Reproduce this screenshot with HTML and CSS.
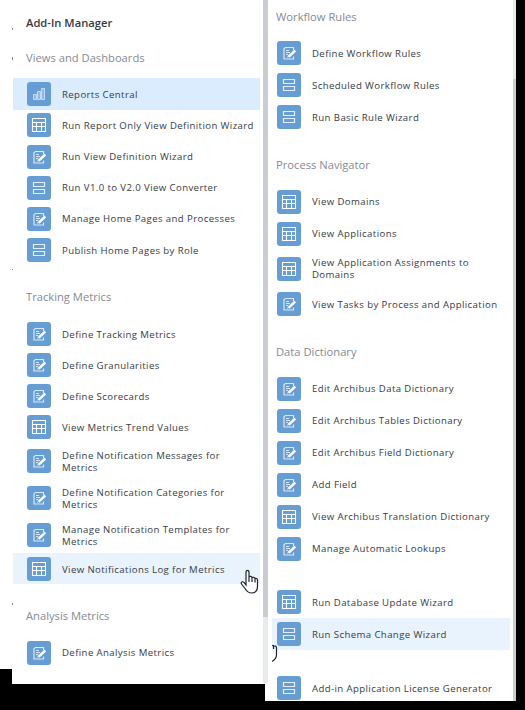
FILE: index.html
```html
<!DOCTYPE html>
<html lang="en">
<head>
<meta charset="utf-8">
<title>Add-In Manager</title>
<link rel="stylesheet" href="styles.css">
</head>
<body>
<svg class="defs" aria-hidden="true">
  <symbol id="chart" viewBox="0 0 24 24"><g fill="#8fb8e0" stroke="#c3daf0"><path d="M6.500 12.500h3v5h-3zM10.500 9.500h3v8h-3zM14.500 6.500h3v11h-3z"/></g></symbol>
  <symbol id="table" viewBox="0 0 24 24"><path fill="none" stroke="#fff" stroke-width="1.100" d="M5.500 5.500h13v13h-13zM5 9.500h14M5 13.500h14M9.500 9.500v9M14.500 9.500v9"/></symbol>
  <symbol id="form" viewBox="0 0 24 24"><g fill="none" stroke="#d9e8f6"><path stroke-width="1.200" d="M16.500 9V6.500h-8l-1.500 1v10.500h9.500V15.500M9 9.500h3M9 11.500h4M9 13.500h2"/><path stroke="#fff" stroke-width="2.400" d="M11.500 15.800L18.300 9.500"/><path d="M10.500 16.500l1.500-3"/></g></symbol>
  <symbol id="stack" viewBox="0 0 24 24"><path fill="none" stroke="#e3eef9" stroke-width="1.200" d="M6.500 6.500h11v4h-11zM6.500 13.500h11v4h-11z"/></symbol>
</svg>
<main class="app">
  <div class="gutter"></div>
  <section class="panel panel-left">
    <div class="content">
      <h1>Add-In Manager</h1>
      <h2>Views and Dashboards</h2>
      <ul>
        <li class="selected"><svg><use href="#chart"/></svg><span>Reports Central</span></li>
        <li><svg><use href="#table"/></svg><span>Run Report Only View Definition Wizard</span></li>
        <li><svg><use href="#form"/></svg><span>Run View Definition Wizard</span></li>
        <li><svg><use href="#stack"/></svg><span>Run V1.0 to V2.0 View Converter</span></li>
        <li><svg><use href="#form"/></svg><span>Manage Home Pages and Processes</span></li>
        <li><svg><use href="#stack"/></svg><span>Publish Home Pages by Role</span></li>
      </ul>
      <h2 class="tracking">Tracking Metrics</h2>
      <ul>
        <li><svg><use href="#form"/></svg><span>Define Tracking Metrics</span></li>
        <li><svg><use href="#form"/></svg><span>Define Granularities</span></li>
        <li><svg><use href="#form"/></svg><span>Define Scorecards</span></li>
        <li><svg><use href="#table"/></svg><span>View Metrics Trend Values</span></li>
        <li class="tall"><svg><use href="#form"/></svg><span>Define Notification Messages for<br>Metrics</span></li>
        <li class="tall"><svg><use href="#form"/></svg><span>Define Notification Categories for<br>Metrics</span></li>
        <li class="tall"><svg><use href="#form"/></svg><span>Manage Notification Templates for<br>Metrics</span></li>
        <li class="hover"><svg><use href="#table"/></svg><span>View Notifications Log for Metrics</span></li>
      </ul>
      <h2 class="analysis">Analysis Metrics</h2>
      <ul>
        <li><svg><use href="#form"/></svg><span>Define Analysis Metrics</span></li>
      </ul>
    </div>
    <div class="scroll"><div class="thumb"></div></div>
    <i class="speck s1"></i><i class="speck s2"></i><i class="speck s3"></i><i class="speck s4"></i>
    <svg class="cursor" viewBox="0 0 20 26"><path d="M6 16V3.500C6 .7 9 .7 9 3.500V8c.5-1 3-.7 3 .8.700-1 2.800-.6 3 .8 1-.6 2.500 0 2.500 1.500V17c0 4-2 7-6 7-3.500 0-5-2-6.500-4.500L1.500 15c-1-2 1-3 2.500-1.500zM9 8v5M12 9v4M15 10v3.500"/></svg>
  </section>
  <section class="panel panel-right">
    <div class="content">
      <h2>Workflow Rules</h2>
      <ul class="workflow">
        <li><svg><use href="#form"/></svg><span>Define Workflow Rules</span></li>
        <li><svg><use href="#stack"/></svg><span>Scheduled Workflow Rules</span></li>
        <li><svg><use href="#stack"/></svg><span>Run Basic Rule Wizard</span></li>
      </ul>
      <h2 class="process">Process Navigator</h2>
      <ul>
        <li><svg><use href="#table"/></svg><span>View Domains</span></li>
        <li><svg><use href="#table"/></svg><span>View Applications</span></li>
        <li class="tall"><svg><use href="#table"/></svg><span>View Application Assignments to<br>Domains</span></li>
        <li class="low"><svg><use href="#form"/></svg><span>View Tasks by Process and Application</span></li>
      </ul>
      <h2 class="data">Data Dictionary</h2>
      <ul>
        <li><svg><use href="#form"/></svg><span>Edit Archibus Data Dictionary</span></li>
        <li><svg><use href="#form"/></svg><span>Edit Archibus Tables Dictionary</span></li>
        <li><svg><use href="#form"/></svg><span>Edit Archibus Field Dictionary</span></li>
        <li><svg><use href="#form"/></svg><span>Add Field</span></li>
        <li><svg><use href="#table"/></svg><span>View Archibus Translation Dictionary</span></li>
        <li><svg><use href="#form"/></svg><span>Manage Automatic Lookups</span></li>
      </ul>
      <ul class="update">
        <li><svg><use href="#table"/></svg><span>Run Database Update Wizard</span></li>
        <li class="hover"><svg><use href="#stack"/></svg><span>Run Schema Change Wizard</span></li>
      </ul>
      <ul class="license">
        <li><svg><use href="#stack"/></svg><span>Add-in Application License Generator</span></li>
      </ul>
    </div>
    <div class="scroll"><div class="thumb"></div></div>
    <svg class="cursor-edge" viewBox="0 0 6 18"><path d="M0 .5h1.500V4M1.500 1.500Q4.500 0 4.500 3v6.500Q4.500 14 0 16.500"/></svg>
  </section>
</main>
</body>
</html>
```

FILE: styles.css
```css
* { box-sizing: border-box; }
body { margin: 0; background: #000; font-family: "Open Sans", sans-serif; color: #363c46; }
.defs { position: absolute; width: 0; height: 0; }
.app { display: flex; align-items: flex-start; width: 525px; height: 710px; overflow: hidden; }
.gutter { width: 12px; height: 669px; background: #fff; }
.panel { position: relative; display: flex; background: #fff; overflow: hidden; }
.panel-left { width: 256px; height: 684px; z-index: 1; }
.panel-right { width: 251px; height: 701px; margin-left: -3px; }
.content { flex: 1; min-width: 0; }
.panel-left .content { padding: 13px 3px 0 1px; }
.panel-right .content { padding: 7px 3px 0 7px; }
h1, h2 { margin: 0 0 0 13px; font-size: 11.200px; line-height: 19px; height: 20px; font-weight: 400; white-space: nowrap; }
h1 { font-weight: 600; color: #363b45; }
h2 { color: #868b93; }
h1 + h2 { margin-top: 15px; }
.panel-left ul { padding-top: 10.300px; }
.panel-right h2 { margin-left: 4px; }
.panel-right ul { padding-top: 10px; }
ul { margin: 0; padding: 0; list-style: none; }
li { display: flex; align-items: center; height: 31.200px; padding-left: 14px; font-size: 9.600px; line-height: 12px; letter-spacing: .4px; white-space: nowrap; }
li.selected { height: 31.500px; }
.panel-left .tracking + ul li { height: 31px; }
.panel-left .tracking + ul li.tall { height: 37px; }
.panel-right li { height: 32px; padding-left: 5px; }
.panel-right li.tall { height: 38px; }
li svg { width: 24px; height: 24px; flex: none; margin-right: 11px; border-radius: 3px; background: #669dd4; }
.panel-left li span, .workflow span, .low span, .update span, .license span { padding-top: 1px; }
.panel-left .tracking + ul span { padding-top: 2px; }
.selected { background: #dbecfe; }
.hover { background: #e8f3fe; }
.panel-left h2.tracking { margin-top: 21.200px; }
.panel-left .tracking + ul { padding-top: 11.200px; }
.panel-left h2.analysis { margin-top: 21.400px; }
.panel-left .analysis + ul { padding-top: 11.600px; }
.panel-right h2.process { margin-top: 22px; }
.panel-right .process + ul { padding-top: 11px; }
.panel-right h2.data { margin-top: 22px; }
.panel-right .data + ul { padding-top: 11px; }
.panel-right ul.update { padding-top: 21px; }
.panel-right ul.license { padding-top: 22px; }
.panel-left .scroll { width: 5px; height: 683px; background: #e7ebeb; }
.panel-left .thumb { height: 617px; background: #c9cdd2; }
.panel-right .scroll { width: 3px; padding-top: 79px; background: #e7e9ec; }
.panel-right .thumb { height: 622px; background: #c9cdd2; }
.speck { position: absolute; left: 0; width: 1px; height: 2px; background: #888; }
.s1 { top: 28px; }
.s2 { top: 57px; height: 3px; }
.s3 { top: 269px; height: 1px; }
.s4 { top: 603px; }
.cursor { position: absolute; left: 228px; top: 569px; width: 20px; height: 26px; fill: #fff; stroke: #202336; stroke-width: 1.200; }
.cursor-edge { position: absolute; left: 7px; top: 645px; width: 6px; height: 18px; fill: none; stroke: #202336; stroke-width: 1.200; }
```
